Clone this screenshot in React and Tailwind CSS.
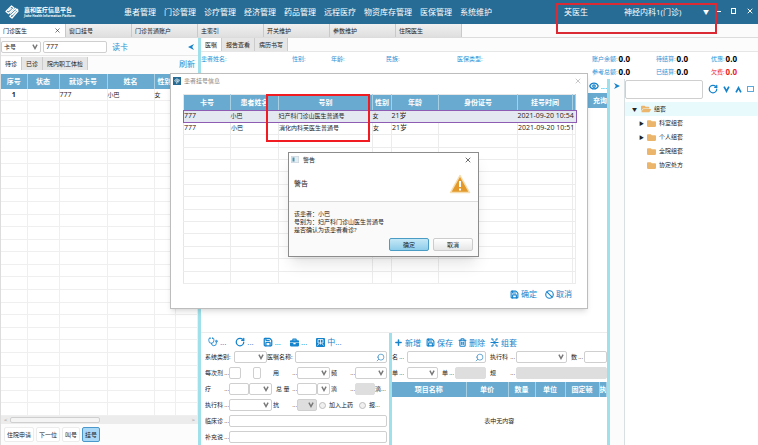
import React from 'react';
import { Stethoscope, Save, Trash2, Eye, RotateCw, Ban, Search, Plus, X } from 'lucide-react';
import { FaFolder, FaFolderOpen, FaBriefcase } from 'react-icons/fa';

const Chevron = ({ up = false, className = '' }) => (
  <svg viewBox="0 0 10 10" className={className} fill="none" stroke="currentColor" strokeWidth="2.4">
    <path d={up ? 'M1.5 9 5 2.5 8.5 9' : 'M1.5 1 5 7.5 8.5 1'} />
  </svg>
);

const Select = ({ id, label, className = '', disabled = false, value = '' }) => (
  <span className={`relative block h-3 shrink-0 ${className}`}>
    <select
      id={id}
      aria-label={label}
      disabled={disabled}
      defaultValue={value}
      className={`block h-full w-full appearance-none rounded-xs border border-[#cfcfcf] pl-0.5 text-[6px] leading-[8px] ${disabled ? 'bg-[#dedede]' : 'bg-white'}`}
    >
      <option value={value}>{value}</option>
    </select>
    <Chevron className="pointer-events-none absolute top-[3px] right-[3px] h-[6px] w-[6px] text-[#777]" />
  </span>
);

const Input = ({ id, label, className = '', disabled = false, value = '' }) => (
  <input
    id={id}
    aria-label={label}
    disabled={disabled}
    defaultValue={value}
    className={`block h-3 min-w-0 rounded-xs border px-0.5 text-[7px] leading-[8px] ${disabled ? 'border-[#dedede] bg-[#dedede]' : 'border-[#cfcfcf] bg-white'} ${className}`}
  />
);

const SearchInput = ({ id, className = '' }) => (
  <span className={`relative block h-3 ${className}`}>
    <Input id={id} className="w-full" />
    <Search className="absolute top-[2px] right-[2px] h-[9px] w-[9px] text-[#3c8fc6] -scale-x-100" strokeWidth={2} />
  </span>
);

const Label = ({ htmlFor, children, className = 'w-6', dots = false }) => (
  <label htmlFor={htmlFor} className={`flex shrink-0 justify-between overflow-hidden ${className}`}>
    <span>{children}</span>
    {dots && <span>...</span>}
  </label>
);

const Tool = ({ icon, children, className = '' }) => (
  <button type="button" className={`flex items-center gap-[2px] text-[8px] leading-[10px] text-[#1583cc] ${className}`}>
    {icon}
    <span>{children}</span>
  </button>
);

const Splitter = () => <div className="w-[3px] shrink-0 bg-[#9fe0ea]" />;

const CompanyMark = ({ className }) => (
  <svg viewBox="0 0 28 28" className={className} fill="none" stroke="currentColor" strokeWidth="2.6" strokeLinejoin="round">
    <path d="M2 13 13 2l5 4L7 17z" />
    <path d="M10 22 26 8" />
    <path d="M6 12 13 6" />
    <path d="M10 17 21 7l5 5-12 14-5-4" />
    <path d="M14 20 21 13" />
  </svg>
);

const PersonCard = () => (
  <svg viewBox="0 0 18 18" className="h-[9px] w-[9px]">
    <rect width="18" height="18" rx="2" fill="#1583cc" />
    <path d="M4 3h10v7H4zM9 3v10M3 15l3-4M15 15l-3-4" stroke="#fff" strokeWidth="1.5" fill="none" />
  </svg>
);

const GroupIcon = () => (
  <svg viewBox="0 0 18 18" className="h-[9px] w-[9px]" fill="none" stroke="#1583cc" strokeWidth="2">
    <path d="M2 2h4v3l3 3 3-3V2h4M2 16h4v-3l3-3 3 3v3h4M1 9h16" />
  </svg>
);

const menus = ['患者管理', '门诊管理', '诊疗管理', '经济管理', '药品管理', '远程医疗', '物资库存管理', '医保管理', '系统维护'];

function Header() {
  return (
    <header className="relative flex h-6 shrink-0 items-center bg-[#266c94] text-[8px] leading-[10px] text-white">
      <div className="flex w-[124px] shrink-0 items-center gap-[5px] pl-[5px]">
        <CompanyMark className="h-[14px] w-[14px]" />
        <div>
          <div className="text-[6px] leading-[8px] font-bold">嘉和医疗信息平台</div>
          <div className="text-[3px] leading-[4px] font-bold">Jiahe Health Information Platform</div>
        </div>
      </div>
      <nav className="flex gap-2">
        {menus.map((m) => (
          <a key={m} href="#" className="block">{m}</a>
        ))}
      </nav>
      <div className="ml-auto flex items-center">
        <span className="mr-9">芙医生</span>
        <button type="button" className="mr-[6px] flex w-[85px] items-center justify-between">
          <span>神经内科1(门诊)</span>
          <span className="text-[6px]">▼</span>
        </button>
        <div className="flex items-center gap-[10px] self-start pr-1">
          <button type="button" aria-label="最小化" className="h-[6px] w-[6px]"><span className="block h-px w-full bg-white" /></button>
          <button type="button" aria-label="最大化" className="h-[6px] w-[5px] border border-white" />
          <button type="button" aria-label="关闭"><X className="h-2 w-2" strokeWidth={3} /></button>
        </div>
      </div>
      <div className="pointer-events-none absolute top-[3px] right-[41px] z-10 h-[31px] w-[161px] border-2 border-[#dc2a35]" />
    </header>
  );
}

function PageTabs() {
  const tabs = ['门诊医生', '窗口挂号', '门诊普通账户', '主索引', '开关维护', '参数维护', '住院医生'];
  return (
    <div className="flex h-[14px] shrink-0 border-b border-[#dcdcdc] bg-[#fbfbfb]">
      {tabs.map((t, i) => (
        <button
          type="button"
          key={t}
          className={`flex w-[66px] items-center justify-between border-r border-[#c9c9c9] pr-1 pl-[3px] ${i === 0 ? 'bg-white' : 'bg-linear-to-b from-[#f0f0f0] to-[#dfdfdf]'}`}
        >
          {t}
          {i === 0 && <X className="h-[7px] w-[7px]" strokeWidth={2} />}
        </button>
      ))}
    </div>
  );
}

const SubTabs = ({ tabs }) => (
  <div className="flex h-[13px]">
    {tabs.map((t, i) => (
      <button
        type="button"
        key={t}
        className={`border-r border-[#cccccc] px-[4px] ${i === 0 ? 'bg-white' : 'bg-[#e6e6e6]'}`}
      >
        {t}
      </button>
    ))}
  </div>
);

const blankRows = (n) => Array.from({ length: n }, (_, i) => i);
const NBSP = '\u00a0';

function QueuePanel() {
  const first = ['1', NBSP, '777', '小巴', '女', NBSP];
  return (
    <aside className="flex w-[198px] shrink-0 flex-col border-l border-[#dddddd] bg-[#fcfcfc]">
      <div className="flex h-[18px] shrink-0 items-center gap-[2px] border-b border-[#e8e8e8]">
        <Select label="查询方式" value="卡号" className="w-10" />
        <Input label="卡号" value="777" className="w-16" />
        <a href="#" className="ml-[3px] text-[8px] text-[#2a93d5]">读卡</a>
        <svg viewBox="0 0 10 10" className="mr-1 ml-auto h-[6px] w-[6px] fill-[#1583cc]"><path d="M10 0 0 5l10 5-3-5z" /></svg>
      </div>
      <div className="flex h-[18px] shrink-0 items-start justify-between pt-px pr-[3px]">
        <SubTabs tabs={['待诊', '已诊', '院内职工体检']} />
        <a href="#" className="text-[8px] leading-[13px] text-[#2a93d5]">刷新</a>
      </div>
      <div className="min-h-0 flex-1">
        <table className="h-full w-full table-fixed border-collapse bg-white">
          <colgroup>
            <col className="w-[26px]" /><col className="w-8" /><col className="w-12" /><col className="w-[47px]" /><col className="w-[21px]" /><col />
          </colgroup>
          <thead>
            <tr className="h-[15px] bg-[#69abd0] text-[7px] text-white">
              {['序号', '状态', '就诊卡号', '姓名', '性别', ''].map((h, i) => (
                <th key={i} className="overflow-hidden border-r border-[#a8d0e5] p-0 whitespace-nowrap">{h}</th>
              ))}
            </tr>
          </thead>
          <tbody>
            <tr className="border-b border-[#efefef]">
              {first.map((c, i) => (
                <td key={i} className={`border-r border-[#efefef] p-0 align-middle ${i === 0 ? 'text-center text-[7px] font-bold' : ''} ${i === 2 ? 'text-[7px]' : ''}`}>{c}</td>
              ))}
            </tr>
            {blankRows(25).map((r) => (
              <tr key={r} className="border-b border-[#efefef]">
                {blankRows(6).map((c) => <td key={c} className="border-r border-[#efefef] p-0 align-middle">{NBSP}</td>)}
              </tr>
            ))}
          </tbody>
        </table>
      </div>
      <div className="flex h-2 shrink-0 items-center bg-[#ececec] px-[3px] text-[#888]">
        <span>&lt;</span>
        <span className="ml-[3px] h-[6px] w-[90px] rounded-xs border border-[#cfcfcf] bg-[#f4f4f4]" />
        <span className="ml-auto">&gt;</span>
      </div>
      <div className="flex h-[21px] shrink-0 items-center gap-[2px] pl-[3px]">
        {['住院申请', '下一位', '叫号', '挂号'].map((b, i) => (
          <button
            type="button"
            key={b}
            className={`h-[15px] rounded-xs border px-[2px] ${i === 3 ? 'border-[#4a97cc] bg-[#a9d9f7]' : 'border-[#ececec] bg-white'}`}
          >
            {b}
          </button>
        ))}
      </div>
    </aside>
  );
}

function PatientBar() {
  const money = [
    [['账户余额', false], ['待结算', false], ['优惠', false]],
    [['参考总额', false], ['已结算', false], ['欠费', true]],
  ];
  return (
    <div className="flex h-[27px] shrink-0 justify-between bg-white">
      <div className="flex pt-[3px] text-[#2d93d6]">
        <span className="w-[91px]">患者姓名:</span>
        <span className="w-[39px]">性别:</span>
        <span className="w-[55px]">年龄:</span>
        <span className="w-[71px]">民族:</span>
        <span>医保类型:</span>
      </div>
      <div className="flex flex-col gap-[3px] pt-[2px]">
        {money.map((row, i) => (
          <div key={i} className="grid grid-cols-[64px_55px_47px] leading-[10px]">
            {row.map(([name, owed]) => (
              <span key={name} className={`flex items-center gap-px ${owed ? 'text-[#ee1c25]' : 'text-[#2d93d6]'}`}>
                {name}:
                <b className={`text-[8px] ${owed ? '' : 'text-black'}`}>0.0</b>
              </span>
            ))}
          </div>
        ))}
      </div>
    </div>
  );
}

function OrderForm() {
  const blue = 'h-[10px] w-[10px]';
  return (
    <form className="flex w-[188px] shrink-0 flex-col gap-1 pr-[2px] pb-[2px] pl-1">
      <div className="flex h-[14px] items-end gap-[9px] pl-[3px]">
        <Tool icon={<Stethoscope className={blue} />}>...</Tool>
        <Tool icon={<RotateCw className={blue} strokeWidth={3} />}>...</Tool>
        <Tool icon={<Save className={blue} strokeWidth={3} />}>...</Tool>
        <Tool icon={<FaBriefcase className="h-[9px] w-[9px]" />}>...</Tool>
        <Tool icon={<PersonCard />}>中...</Tool>
      </div>
      <div className="flex items-center">
        <Label htmlFor="kind" className="w-[29px]">系统类别:</Label>
        <Select id="kind" className="w-[33px]" />
        <Label htmlFor="order" className="w-7">医嘱名称:</Label>
        <SearchInput id="order" className="flex-1" />
      </div>
      <div className="flex items-center">
        <Label htmlFor="dose" dots>每次剂</Label>
        <Input id="dose" className="w-3" />
        <Input label="剂量单位" className="ml-3 w-2" />
        <Label htmlFor="usage" dots className="ml-3 w-6">用</Label>
        <Select id="usage" className="w-[33px]" />
        <Label htmlFor="freq" dots className="ml-px w-6">频</Label>
        <Select id="freq" className="flex-1" />
      </div>
      <div className="flex items-center">
        <Label htmlFor="course" dots>疗</Label>
        <Input id="course" className="w-5" />
        <Select label="疗程单位" className="w-[23px]" />
        <Label htmlFor="total" dots className="ml-px w-6 pl-[3px]">总 量</Label>
        <Input id="total" className="w-5" />
        <Select label="总量单位" className="w-[13px]" />
        <Label htmlFor="drip" dots className="ml-px w-6">滴</Label>
        <Input id="drip" disabled className="w-5" />
        <span>滴...</span>
      </div>
      <div className="flex items-center">
        <Label htmlFor="dept" dots>执行科</Label>
        <Select id="dept" className="w-[43px]" />
        <Label htmlFor="anti" dots className="ml-px w-6">抗</Label>
        <Select id="anti" disabled className="w-5" />
        {['加入上药', '报...'].map((t) => (
          <label key={t} className="mr-1 ml-[2px] flex items-center gap-[3px]">
            <input type="radio" name="extra" className="h-[7px] w-[7px] appearance-none rounded-full border border-[#bdbdbd] bg-[#f0f0f0]" />
            {t}
          </label>
        ))}
      </div>
      <div className="flex items-center">
        <Label htmlFor="diag" dots>临床诊</Label>
        <Input id="diag" className="flex-1" />
      </div>
      <div className="flex items-center">
        <Label htmlFor="note" dots>补充说</Label>
        <Input id="note" className="flex-1" />
      </div>
    </form>
  );
}

function ItemForm() {
  const blue = 'h-[9px] w-[9px]';
  return (
    <section className="flex min-w-0 flex-1 flex-col overflow-hidden">
      <div className="flex h-[18px] items-center gap-[5px] pt-px pl-[2px]">
        <Tool icon={<Plus className={blue} strokeWidth={4} />}>新增</Tool>
        <Tool icon={<Save className={blue} strokeWidth={3} />}>保存</Tool>
        <Tool icon={<Trash2 className={blue} strokeWidth={3} />}>删除</Tool>
        <Tool icon={<GroupIcon />}>组套</Tool>
      </div>
      <div className="flex items-center">
        <Label htmlFor="item" dots className="w-3">名</Label>
        <SearchInput id="item" className="ml-[3px] w-[79px]" />
        <Label htmlFor="item-dept" dots className="ml-1 w-[25px]">执行科</Label>
        <Select id="item-dept" className="ml-px w-[51px]" />
        <Label htmlFor="qty" dots className="ml-1 w-3">数</Label>
        <Input id="qty" className="ml-px flex-1" />
      </div>
      <div className="mt-1 flex items-center">
        <Label htmlFor="unit" dots className="w-3">单</Label>
        <Select id="unit" className="ml-[3px] w-[31px]" />
        <Label htmlFor="price" dots className="ml-1 w-3">单</Label>
        <Input id="price" disabled className="ml-px w-[31px]" />
        <Label htmlFor="spec" dots className="ml-1 w-[25px]">规</Label>
        <Input id="spec" disabled className="ml-px flex-1" />
      </div>
      <table className="mt-[3px] w-full table-fixed border-collapse">
        <colgroup>
          <col className="w-[74px]" /><col className="w-[42px]" /><col className="w-[27px]" /><col className="w-[30px]" /><col className="w-[34px]" /><col />
        </colgroup>
        <thead>
          <tr className="h-[15px] bg-[#69abd0] text-[7px] text-white">
            {['项目名称', '单价', '数量', '单位', '固定顿', '执'].map((h) => (
              <th key={h} className="overflow-hidden border-r border-[#a8d0e5] p-0 whitespace-nowrap">{h}</th>
            ))}
          </tr>
        </thead>
        <tbody>
          <tr className="h-12"><td colSpan={6} className="p-0 text-center">表中无内容</td></tr>
        </tbody>
      </table>
    </section>
  );
}

function TemplatePanel() {
  const nodes = [['科室组套', true], ['个人组套', true], ['全院组套', false], ['协定处方', false]];
  const ico = 'h-[7px] w-[7px] text-[#1583cc]';
  return (
    <aside className="flex w-[148px] shrink-0 bg-[#fcfcfc]">
      <div className="w-[14px] shrink-0 pt-1 pl-1">
        <svg viewBox="0 0 10 10" className="h-[6px] w-[6px] fill-[#1583cc]"><path d="M0 0 10 5 0 10l3-5z" /></svg>
      </div>
      <div className="flex-1 border-l border-[#d8e0e2] bg-white">
        <div className="flex items-center justify-between pr-1">
          <input aria-label="组套检索" className="mt-px h-[19px] w-[78px] rounded-xs border border-[#cfcfcf] bg-white px-1" />
          <button type="button" aria-label="刷新"><RotateCw className="h-[10px] w-[10px] text-[#1583cc]" strokeWidth={3} /></button>
          <button type="button" aria-label="展开"><Chevron className={ico} /></button>
          <button type="button" aria-label="收起"><Chevron up className={ico} /></button>
          <button type="button" aria-label="空白" className="h-[6px] w-[7px] border border-[#5aa8dc]" />
        </div>
        <ul className="mt-[3px]">
          <li>
            <div className="flex h-[14px] items-center gap-[3px] bg-[#e9fafc] pl-[7px]">
              <span className="w-[6px] text-[5px]">▼</span>
              <FaFolderOpen className="h-[10px] w-[10px] text-[#ecb56c]" />
              组套
            </div>
            <ul>
              {nodes.map(([n, open]) => (
                <li key={n} className="flex h-[14px] items-center gap-[3px] pl-[14px]">
                  <span className="w-[5px] text-[5px]">{open ? '▶' : ''}</span>
                  <FaFolder className="h-[9px] w-[9px] text-[#ecb56c]" />
                  {n}
                </li>
              ))}
            </ul>
          </li>
        </ul>
      </div>
    </aside>
  );
}

function RegisterDialog() {
  const rows = [
    ['777', '小巴', '妇产科门诊山医生普通号', '女', '21岁', NBSP, '2021-09-20 10:54', NBSP],
    ['777', '小巴', '消化内科芙医生普通号', '女', '21岁', NBSP, '2021-09-20 10:51', NBSP],
  ];
  const nums = [0, 4, 6];
  return (
    <div role="dialog" aria-label="患者挂号信息" className="absolute top-[73px] left-[170px] flex h-[236px] w-[418px] flex-col border border-[#bdbdbd] bg-white shadow-md">
      <div className="flex h-[14px] items-center gap-[3px] px-[2px] text-[#888]">
        <span className="flex h-2 w-2 items-center justify-center bg-[#266c94] text-white"><CompanyMark className="h-[6px] w-[6px]" /></span>
        患者挂号信息
        <button type="button" aria-label="关闭" className="ml-auto pr-[3px] text-[#aaa]"><X className="h-2 w-2" strokeWidth={2} /></button>
      </div>
      <div className="relative mt-[6px] mr-[11px] ml-3 min-h-0 flex-1">
        <table className="h-full w-full table-fixed border-collapse border border-[#e6e6e6]">
          <colgroup>
            <col className="w-[47px]" /><col className="w-12" /><col className="w-[94px]" /><col className="w-[19px]" /><col className="w-[47px]" /><col className="w-[79px]" /><col className="w-[55px]" /><col />
          </colgroup>
          <thead>
            <tr className="h-4 bg-[#69abd0] text-[7px] text-white">
              {['卡号', '患者姓名', '号别', '性别', '年龄', '身份证号', '挂号时间', ''].map((h, i) => (
                <th key={i} className="overflow-hidden border-r border-[#a8d0e5] p-0 whitespace-nowrap">{h}</th>
              ))}
            </tr>
          </thead>
          <tbody>
            {rows.map((r, i) => (
              <tr key={i} className={`border-b border-[#ececec] ${i === 0 ? 'bg-[#e4e8f0] outline outline-[#8f5cb3]' : ''}`}>
                {r.map((c, j) => (
                  <td key={j} className={`p-0 align-middle whitespace-nowrap ${nums.includes(j) ? 'text-[7px]' : ''} ${i === 0 ? '' : 'border-r border-[#ececec]'}`}>{c}</td>
                ))}
              </tr>
            ))}
            {blankRows(12).map((r) => (
              <tr key={r} className="border-b border-[#ececec]">
                {blankRows(8).map((c) => <td key={c} className="border-r border-[#ececec] p-0 align-middle">{NBSP}</td>)}
              </tr>
            ))}
          </tbody>
        </table>
        <div className="pointer-events-none absolute top-0 left-[83px] h-12 w-[104px] border-2 border-[#f01c22]" />
      </div>
      <div className="flex h-6 items-center justify-end gap-2 pr-[15px] pb-1">
        <Tool icon={<Save className="h-[9px] w-[9px]" strokeWidth={3} />}>确定</Tool>
        <Tool icon={<Ban className="h-[9px] w-[9px]" strokeWidth={3} />}>取消</Tool>
      </div>
    </div>
  );
}

function WarningDialog() {
  return (
    <div role="alertdialog" aria-label="警告" className="absolute top-[152px] left-[288px] w-[191px] border border-[#8c8c8c] bg-[#fafafa] shadow-lg">
      <div className="flex h-[13px] items-center gap-1 bg-white px-[2px]">
        <svg viewBox="0 0 16 14" className="h-[7px] w-2"><path fill="#e4edf2" stroke="#a9b8c0" d="M.5.5h15v13H.5z" /><path fill="#4c93ac" d="M3 3h4v8H3z" /></svg>
        警告
        <button type="button" aria-label="关闭" className="ml-auto pr-1"><X className="h-2 w-2" strokeWidth={2} /></button>
      </div>
      <div className="flex h-[36px] items-center justify-between border-b border-[#dcdcdc] bg-white pr-[7px] pl-[5px] text-[7px]">
        警告
        <svg viewBox="0 0 44 40" className="h-5 w-[22px]">
          <path d="M22 3 41 37H3z" fill="#e39a2b" stroke="#f6ddb0" strokeWidth="3" strokeLinejoin="round" />
          <path d="M22 14v12M22 29v4" stroke="#fff" strokeWidth="4" />
        </svg>
      </div>
      <div className="pt-2 pl-[5px]">
        <p>该患者：小巴</p>
        <p>号别为：妇产科门诊山医生普通号</p>
        <p>是否确认为该患者看诊?</p>
      </div>
      <div className="flex justify-end gap-1 pt-[4px] pr-[5px] pb-[5px]">
        <button type="button" className="h-[13px] w-10 rounded-xs border border-[#4a9cc4] bg-linear-to-b from-[#c4e8f7] to-[#8ecdea]">确定</button>
        <button type="button" className="h-[13px] w-10 rounded-xs border border-[#cccccc] bg-linear-to-b from-white to-[#e6e6e6]">取消</button>
      </div>
    </div>
  );
}

export default function App() {
  return (
    <div className="relative flex h-screen flex-col overflow-hidden bg-white font-['Open_Sans','Noto_Sans_CJK_SC',sans-serif] text-[6px] leading-[8px] text-[#222]">
      <Header />
      <PageTabs />
      <div className="flex min-h-0 flex-1">
        <QueuePanel />
        <Splitter />
        <main className="flex min-w-0 flex-1 flex-col">
          <div className="h-[14px] shrink-0 border-b border-[#e6e6e6] bg-[#fcfcfc]">
            <SubTabs tabs={['医嘱', '报告查看', '病历书写']} />
          </div>
          <PatientBar />
          <div className="flex min-h-0 flex-1">
            <div className="flex min-w-0 flex-1 flex-col">
              <div className="flex h-[14px] items-center justify-end">
                <Tool icon={<Eye className="h-[10px] w-[10px]" strokeWidth={3} />}>...</Tool>
              </div>
              <div className="flex h-[15px] items-center justify-end bg-[#69abd0] text-[7px] font-bold text-white">充询</div>
              <div className="flex-1" />
              <div className="flex border-t border-[#ececec]">
                <OrderForm />
                <Splitter />
                <ItemForm />
              </div>
            </div>
            <Splitter />
            <TemplatePanel />
          </div>
        </main>
      </div>
      <RegisterDialog />
      <WarningDialog />
    </div>
  );
}
